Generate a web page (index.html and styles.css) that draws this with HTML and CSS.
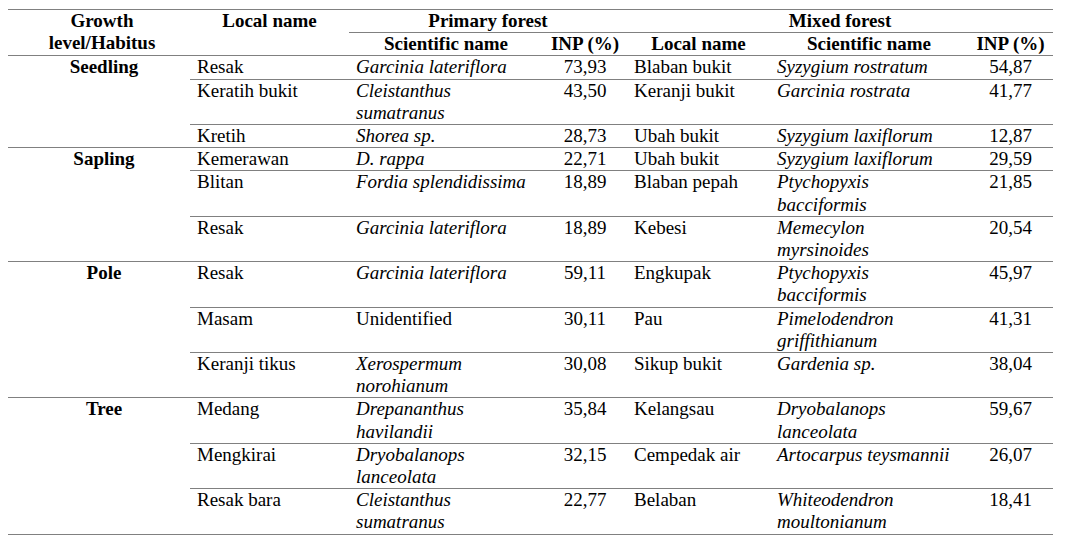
FILE: index.html
```html
<!DOCTYPE html>
<html>
<head>
<meta charset="utf-8">
<link rel="stylesheet" href="styles.css">
</head>
<body>
<table class="inp">
  <colgroup>
    <col class="c1"><col class="c2"><col class="c3"><col class="c4"><col class="c5"><col class="c6"><col class="c7">
  </colgroup>
  <thead>
    <tr>
      <th rowspan="2" class="grp-h">Growth<br>level/Habitus</th>
      <th rowspan="2">Local name</th>
      <th colspan="2" class="sub">Primary forest</th>
      <th colspan="3" class="sub">Mixed forest</th>
    </tr>
    <tr>
      <th>Scientific name</th>
      <th>INP (%)</th>
      <th>Local name</th>
      <th>Scientific name</th>
      <th>INP (%)</th>
    </tr>
  </thead>
  <tbody>
    <tr>
      <td rowspan="3" class="grp">Seedling</td>
      <td>Resak</td><td class="sci">Garcinia lateriflora</td><td class="num">73,93</td>
      <td>Blaban bukit</td><td class="sci">Syzygium rostratum</td><td class="num">54,87</td>
    </tr>
    <tr>
      <td>Keratih bukit</td><td class="sci">Cleistanthus<br>sumatranus</td><td class="num">43,50</td>
      <td>Keranji bukit</td><td class="sci">Garcinia rostrata</td><td class="num">41,77</td>
    </tr>
    <tr>
      <td>Kretih</td><td class="sci">Shorea sp.</td><td class="num">28,73</td>
      <td>Ubah bukit</td><td class="sci">Syzygium laxiflorum</td><td class="num">12,87</td>
    </tr>

    <tr>
      <td rowspan="3" class="grp">Sapling</td>
      <td>Kemerawan</td><td class="sci">D. rappa</td><td class="num">22,71</td>
      <td>Ubah bukit</td><td class="sci">Syzygium laxiflorum</td><td class="num">29,59</td>
    </tr>
    <tr>
      <td>Blitan</td><td class="sci">Fordia splendidissima</td><td class="num">18,89</td>
      <td>Blaban pepah</td><td class="sci">Ptychopyxis<br>bacciformis</td><td class="num">21,85</td>
    </tr>
    <tr>
      <td>Resak</td><td class="sci">Garcinia lateriflora</td><td class="num">18,89</td>
      <td>Kebesi</td><td class="sci">Memecylon<br>myrsinoides</td><td class="num">20,54</td>
    </tr>

    <tr>
      <td rowspan="3" class="grp">Pole</td>
      <td>Resak</td><td class="sci">Garcinia lateriflora</td><td class="num">59,11</td>
      <td>Engkupak</td><td class="sci">Ptychopyxis<br>bacciformis</td><td class="num">45,97</td>
    </tr>
    <tr>
      <td>Masam</td><td>Unidentified</td><td class="num">30,11</td>
      <td>Pau</td><td class="sci">Pimelodendron<br>griffithianum</td><td class="num">41,31</td>
    </tr>
    <tr>
      <td>Keranji tikus</td><td class="sci">Xerospermum<br>norohianum</td><td class="num">30,08</td>
      <td>Sikup bukit</td><td class="sci">Gardenia sp.</td><td class="num">38,04</td>
    </tr>

    <tr>
      <td rowspan="3" class="grp">Tree</td>
      <td>Medang</td><td class="sci">Drepananthus<br>havilandii</td><td class="num">35,84</td>
      <td>Kelangsau</td><td class="sci">Dryobalanops<br>lanceolata</td><td class="num">59,67</td>
    </tr>
    <tr>
      <td>Mengkirai</td><td class="sci">Dryobalanops<br>lanceolata</td><td class="num">32,15</td>
      <td>Cempedak air</td><td class="sci">Artocarpus teysmannii</td><td class="num">26,07</td>
    </tr>
    <tr>
      <td>Resak bara</td><td class="sci">Cleistanthus<br>sumatranus</td><td class="num">22,77</td>
      <td>Belaban</td><td class="sci">Whiteodendron<br>moultonianum</td><td class="num">18,41</td>
    </tr>
  </tbody>
</table>
</body>
</html>
```

FILE: styles.css
```css
html {
  background: #ffffff;
  font-family: "Liberation Serif", "Times New Roman", serif;
  font-size: 19px;
  line-height: 22.2px;
}
body {
  margin: 0;
  padding: 9px 8px 0 8px;
  color: #000000;
}
.inp {
  border-collapse: collapse;
  table-layout: fixed;
  width: 1045px;
  border-top: 1px solid #808080;
  font: inherit;
}
.c1 { width: 182px; }
.c2 { width: 159px; }
.c3 { width: 194px; }
.c4 { width: 84px; }
.c5 { width: 143px; }
.c6 { width: 198px; }
.c7 { width: 85px; }

.inp th {
  font-weight: bold;
  text-align: center;
  vertical-align: top;
  padding: 0;
  border-bottom: 1px solid #808080;
}
.inp th.grp-h {
  padding-left: 6px;
}
.inp td {
  padding: 0 0 0 7px;
  vertical-align: top;
  text-align: left;
  border-bottom: 1px solid #808080;
  white-space: nowrap;
}
.inp td.grp {
  font-weight: bold;
  text-align: center;
  padding: 0 0 0 10px;
}
.inp td.sci {
  font-style: italic;
}
.inp td.num {
  text-align: center;
  padding: 0;
}
```
